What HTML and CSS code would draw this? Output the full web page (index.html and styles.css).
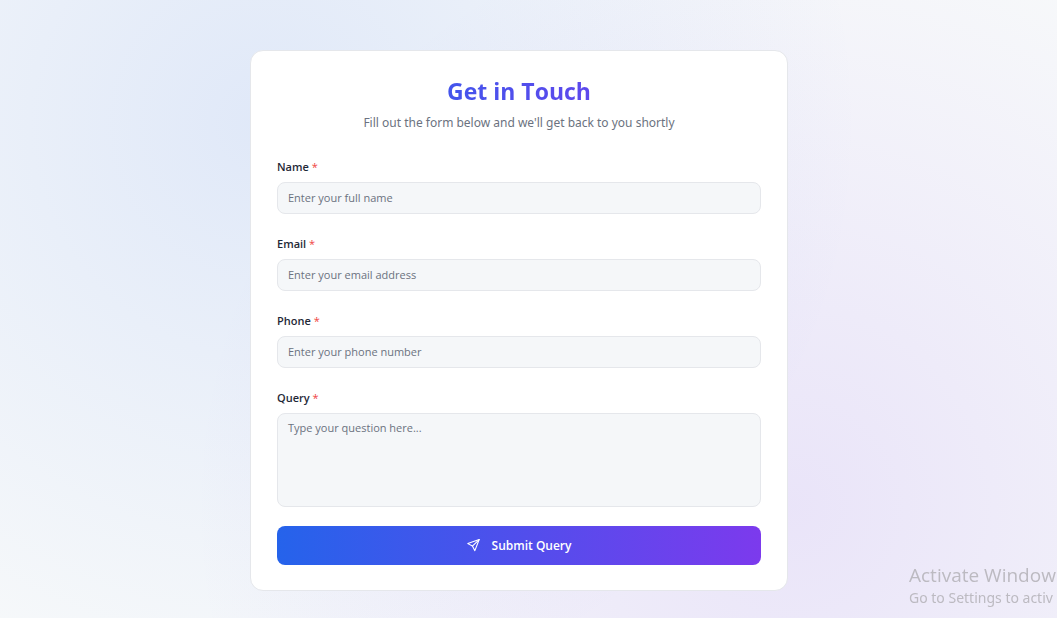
FILE: index.html
```html
<!DOCTYPE html>
<html lang="en">
<head>
<meta charset="utf-8">
<meta name="viewport" content="width=device-width, initial-scale=1">
<title>Get in Touch</title>
<link rel="stylesheet" href="styles.css">
</head>
<body>
<main class="page">
  <section class="card">
    <header class="card-header">
      <h1 class="title">Get in Touch</h1>
      <p class="subtitle">Fill out the form below and we'll get back to you shortly</p>
    </header>
    <form class="form">
      <div class="field">
        <label class="label" for="name">Name <span class="required">*</span></label>
        <input class="control" id="name" type="text" placeholder="Enter your full name">
      </div>
      <div class="field">
        <label class="label" for="email">Email <span class="required">*</span></label>
        <input class="control" id="email" type="email" placeholder="Enter your email address">
      </div>
      <div class="field">
        <label class="label" for="phone">Phone <span class="required">*</span></label>
        <input class="control" id="phone" type="tel" placeholder="Enter your phone number">
      </div>
      <div class="field">
        <label class="label" for="query">Query <span class="required">*</span></label>
        <textarea class="control control-area" id="query" placeholder="Type your question here..."></textarea>
      </div>
      <button class="submit" type="submit">
        <svg class="submit-icon" viewBox="0 0 24 24" fill="none" stroke="currentColor" stroke-width="2" stroke-linecap="round" stroke-linejoin="round" aria-hidden="true"><path d="M22.500 1 1.500 8.500l8.500 4.500L14.500 21.500Z"/><path d="M22.500 1 10 13"/></svg>
        Submit Query
      </button>
    </form>
  </section>
</main>
<aside class="watermark">
  <p class="watermark-title">Activate Window</p>
  <p class="watermark-text">Go to Settings to activ</p>
</aside>
</body>
</html>
```
FILE: styles.css
```css
* {
  box-sizing: border-box;
}

body {
  margin: 0;
  font-family: "Segoe UI", "Open Sans", "Noto Sans", sans-serif;
  color: #1f2937;
  background-color: #f7f9fa;
}

.page {
  min-height: 100vh;
  display: flex;
  justify-content: center;
  align-items: flex-start;
  padding: 50px 19px 27px 0;
  background-image:
    radial-gradient(circle at 25% 20%, rgba(37, 99, 235, 0.11), transparent 64%),
    radial-gradient(circle at 75% 82%, rgba(124, 58, 237, 0.11), transparent 64%);
}

.card {
  width: 100%;
  max-width: 538px;
  padding: 24px 26px 25px;
  border: 1px solid #e5e7eb;
  border-radius: 13px;
  background: #fff;
}

.card-header {
  margin-bottom: 27px;
  text-align: center;
}

.title {
  margin: 0 0 7px;
  font-size: 23px;
  line-height: 32px;
  font-weight: 700;
  color: transparent;
  background: linear-gradient(90deg, #2563eb, #7c3aed);
  background-clip: text;
}

.subtitle {
  margin: 0;
  font-family: "Segoe UI", "Noto Sans", "Open Sans", sans-serif;
  font-size: 12px;
  line-height: 18px;
  color: #6b7280;
}

.form {
  display: flex;
  flex-direction: column;
  gap: 22px;
}

.field {
  display: flex;
  flex-direction: column;
  gap: 7px;
}

.label {
  font-size: 11px;
  line-height: 16px;
  font-weight: 600;
}

.required {
  font-weight: 400;
  color: #ef4444;
}

.control {
  width: 100%;
  height: 32px;
  padding: 0 10px 2px;
  border: 1px solid #e5e7eb;
  border-radius: 8px;
  background: #f5f7f9;
  color: inherit;
  font: 400 11px/16px "Segoe UI", "Open Sans", "Noto Sans", sans-serif;
}

.control::placeholder {
  color: #6b7280;
  opacity: 1;
}

.control-area {
  height: 94px;
  padding: 6px 10px;
  resize: none;
}

.submit {
  display: flex;
  align-items: center;
  justify-content: center;
  gap: 12px;
  width: 100%;
  height: 39px;
  margin-top: -3px;
  padding: 0;
  border: 0;
  border-radius: 8px;
  background: linear-gradient(90deg, #2563eb, #7c3aed);
  color: #fff;
  font: 600 12px/18px "Segoe UI", "Open Sans", "Noto Sans", sans-serif;
}

.submit-icon {
  width: 13px;
  height: 13px;
}

.watermark {
  position: fixed;
  right: 0;
  bottom: 9px;
  width: 148px;
  white-space: nowrap;
  color: #bcbac1;
}

.watermark-title {
  margin: 0;
  font-size: 19px;
  line-height: 24px;
}

.watermark-text {
  margin: 0;
  font-family: "Segoe UI", "Noto Sans", "Open Sans", sans-serif;
  font-size: 14px;
  line-height: 22px;
}
```
